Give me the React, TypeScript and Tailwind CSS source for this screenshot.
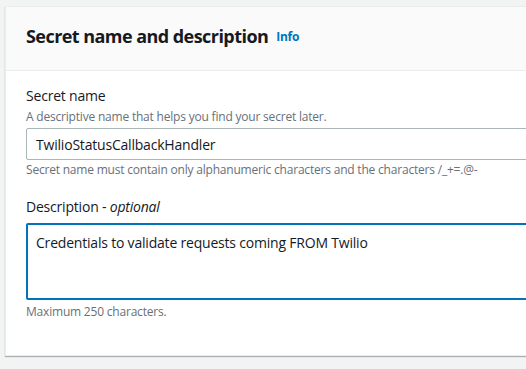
export default function App() {
  return (
    <div
      className="w-[526px] h-[369px] overflow-hidden bg-[#f2f3f3] pl-[5px] pt-[6px] text-[#16191f] tracking-[-0.2px]"
      style={{ fontFamily: '"Open Sans", "Noto Sans", sans-serif' }}
    >
      <div className="w-[640px] h-[350px] bg-white border border-[#eaeded] shadow-[0_1px_1px_0_rgba(0,28,36,0.3)]">
        <header className="h-[64px] bg-[#fafafa] border-b border-[#eaeded] pl-[20px] pb-[6px] flex items-center gap-[8px]">
          <h2 className="text-[18px] font-bold leading-[22px] tracking-[-0.55px]">Secret name and description</h2>
          <a className="text-[12px] font-bold text-[#0073bb] mt-[2px] tracking-[-0.3px]">Info</a>
        </header>
        <div className="pl-[20px] pt-[15px]">
          <div className="text-[14px] leading-[20px]">Secret name</div>
          <div className="mt-[3px] text-[12px] leading-[16px] text-[#687078]">
            A descriptive name that helps you find your secret later.
          </div>
          <div className="mt-[3px] h-[32px] w-[560px] border border-[#aab7b8] rounded-[2px] flex items-center pl-[9px] text-[14px]">
            TwilioStatusCallbackHandler
          </div>
          <div className="mt-[2px] text-[12px] leading-[16px] text-[#687078]">
            Secret name must contain only alphanumeric characters and the characters /_+=.@-
          </div>

          <div className="mt-[19px] text-[14px] leading-[20px]">
            Description - <i>optional</i>
          </div>
          <div className="mt-[6px] h-[77px] w-[560px] border-2 border-[#0073bb] rounded-[2px] pl-[8px] pt-[8px] text-[14px] leading-[20px]">
            Credentials to validate requests coming FROM Twilio
          </div>
          <div className="mt-[4px] text-[12px] leading-[16px] text-[#687078]">Maximum 250 characters.</div>
        </div>
      </div>
    </div>
  );
}
